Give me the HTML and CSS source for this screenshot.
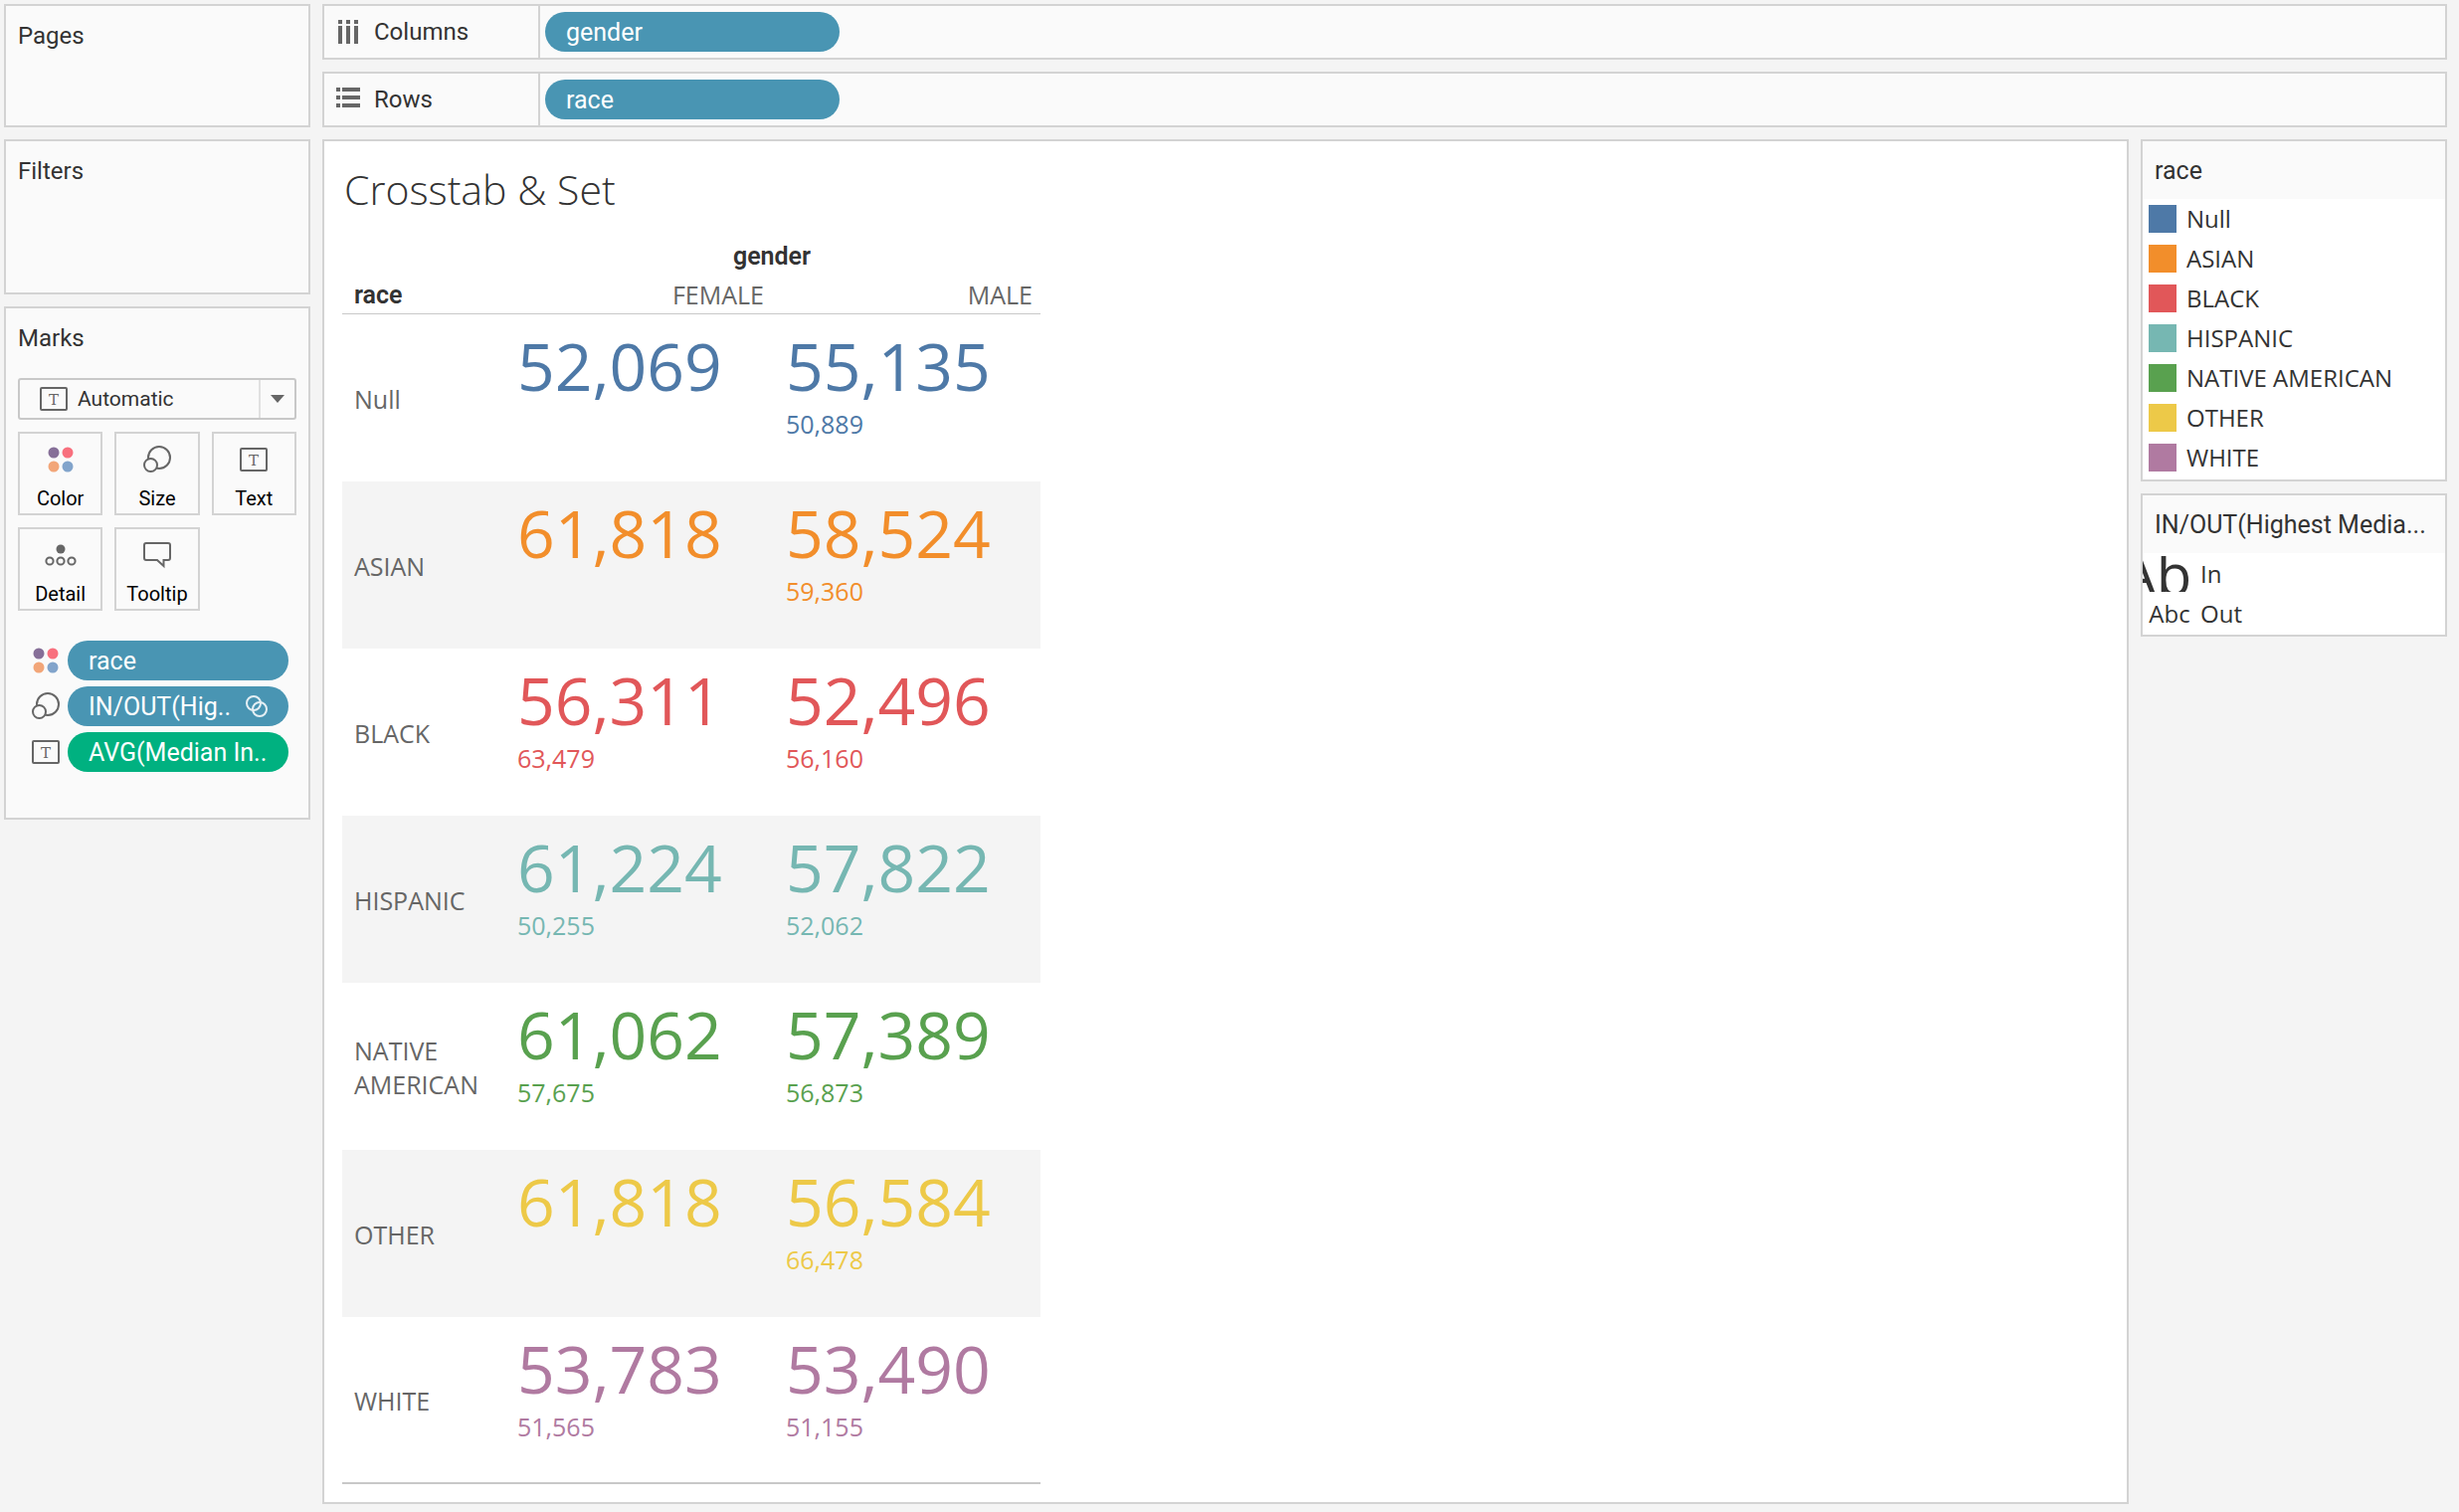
FILE: index.html
```html
<!DOCTYPE html>
<html lang="en">
<head>
<meta charset="utf-8">
<title>Crosstab &amp; Set</title>
<meta name="viewport" content="width=device-width, initial-scale=1">
<link rel="stylesheet" href="styles.css">
</head>
<body>
<svg class="defs" width="0" height="0" aria-hidden="true">
  <symbol id="i-color" viewBox="0 0 28 28">
    <circle cx="7" cy="7" r="5.5" fill="#866f98"/>
    <circle cx="21" cy="7" r="5.5" fill="#f8707e"/>
    <circle cx="7" cy="21" r="5.5" fill="#f2a679"/>
    <circle cx="21" cy="21" r="5.5" fill="#82a4cb"/>
  </symbol>
  <symbol id="i-size" viewBox="0 0 28 28">
    <circle cx="16" cy="12" r="11" fill="none" stroke="#666" stroke-width="2"/>
    <circle cx="7.500" cy="19.500" r="6.500" fill="#fafafa" stroke="#666" stroke-width="2"/>
  </symbol>
  <symbol id="i-text" viewBox="0 0 28 28">
    <rect x="1" y="3" width="26" height="22" rx="1" fill="none" stroke="#666" stroke-width="2"/>
    <text x="14" y="20" text-anchor="middle" class="glyph">T</text>
  </symbol>
  <symbol id="i-detail" viewBox="0 0 32 28">
    <circle cx="16" cy="8" r="4.500" fill="#666"/>
    <g fill="none" stroke="#666" stroke-width="2">
      <circle cx="5" cy="20" r="3.600"/><circle cx="16" cy="20" r="3.600"/><circle cx="27" cy="20" r="3.600"/>
    </g>
  </symbol>
  <symbol id="i-tooltip" viewBox="0 0 28 28">
    <path d="M3 2h22a2 2 0 0 1 2 2v13a2 2 0 0 1-2 2h-4.500v6l-6.500-6H3a2 2 0 0 1-2-2V4a2 2 0 0 1 2-2z" fill="none" stroke="#666" stroke-width="2"/>
  </symbol>
  <symbol id="i-set" viewBox="0 0 24 24">
    <g fill="none" stroke="#e4eff4" stroke-width="2"><circle cx="9" cy="9" r="7"/><circle cx="15" cy="15" r="7"/></g>
  </symbol>
</svg>

<main class="workbook">
  <aside class="cards">
    <section class="card pages"><h2>Pages</h2></section>
    <section class="card filters"><h2>Filters</h2></section>
    <section class="card marks">
      <h2>Marks</h2>
      <div class="mark-type">
        <svg class="icon"><use href="#i-text"/></svg>
        <select aria-label="Mark type"><option>Automatic</option></select>
        <svg class="caret" viewBox="0 0 14 8" aria-hidden="true"><path d="M0 0h14L7 8z" fill="#666"/></svg>
      </div>
      <div class="mark-buttons">
        <button type="button"><svg class="icon"><use href="#i-color"/></svg>Color</button>
        <button type="button"><svg class="icon"><use href="#i-size"/></svg>Size</button>
        <button type="button"><svg class="icon"><use href="#i-text"/></svg>Text</button>
        <button type="button"><svg class="icon wide"><use href="#i-detail"/></svg>Detail</button>
        <button type="button"><svg class="icon"><use href="#i-tooltip"/></svg>Tooltip</button>
      </div>
      <ul class="encodings">
        <li><svg class="icon"><use href="#i-color"/></svg><button type="button" class="pill">race</button></li>
        <li><svg class="icon"><use href="#i-size"/></svg><button type="button" class="pill">IN/OUT(Hig..<svg class="set"><use href="#i-set"/></svg></button></li>
        <li><svg class="icon"><use href="#i-text"/></svg><button type="button" class="pill measure">AVG(Median In..</button></li>
      </ul>
    </section>
  </aside>

  <div class="work">
    <section class="shelf">
      <h2><svg class="shelf-icon" viewBox="0 0 24 24"><path d="M2 0h4v4H2zM10 0h4v4h-4zM18 0h4v4h-4zM2 6h4v18H2zM10 6h4v18h-4zM18 6h4v18h-4z"/></svg>Columns</h2>
      <button type="button" class="pill">gender</button>
    </section>
    <section class="shelf">
      <h2><svg class="shelf-icon" viewBox="0 0 24 24"><path d="M0 0h4v4H0zM6 0h18v4H6zM0 8h4v4H0zM6 8h18v4H6zM0 16h4v4H0zM6 16h18v4H6z"/></svg>Rows</h2>
      <button type="button" class="pill">race</button>
    </section>

    <div class="stage">
      <section class="sheet">
        <h1>Crosstab &amp; Set</h1>
        <table class="crosstab">
          <colgroup><col class="c-race"><col class="c-value"><col class="c-value"></colgroup>
          <thead>
            <tr><td></td><th class="field span" colspan="2" scope="colgroup">gender</th></tr>
            <tr><th class="field" scope="col">race</th><th class="member" scope="col">FEMALE</th><th class="member" scope="col">MALE</th></tr>
          </thead>
          <tbody>
            <tr class="null"><th scope="row">Null</th><td><b>52,069</b></td><td><b>55,135</b><span>50,889</span></td></tr>
            <tr class="asian"><th scope="row">ASIAN</th><td><b>61,818</b></td><td><b>58,524</b><span>59,360</span></td></tr>
            <tr class="black"><th scope="row">BLACK</th><td><b>56,311</b><span>63,479</span></td><td><b>52,496</b><span>56,160</span></td></tr>
            <tr class="hispanic"><th scope="row">HISPANIC</th><td><b>61,224</b><span>50,255</span></td><td><b>57,822</b><span>52,062</span></td></tr>
            <tr class="native"><th scope="row">NATIVE AMERICAN</th><td><b>61,062</b><span>57,675</span></td><td><b>57,389</b><span>56,873</span></td></tr>
            <tr class="other"><th scope="row">OTHER</th><td><b>61,818</b></td><td><b>56,584</b><span>66,478</span></td></tr>
            <tr class="white"><th scope="row">WHITE</th><td><b>53,783</b><span>51,565</span></td><td><b>53,490</b><span>51,155</span></td></tr>
          </tbody>
        </table>
      </section>

      <aside class="legends">
        <section class="legend">
          <h2>race</h2>
          <ul class="swatches">
            <li class="null">Null</li>
            <li class="asian">ASIAN</li>
            <li class="black">BLACK</li>
            <li class="hispanic">HISPANIC</li>
            <li class="native">NATIVE AMERICAN</li>
            <li class="other">OTHER</li>
            <li class="white">WHITE</li>
          </ul>
        </section>
        <section class="legend">
          <h2>IN/OUT(Highest Media...</h2>
          <ul class="sizes">
            <li><span class="sample large">Abc</span>In</li>
            <li><span class="sample">Abc</span>Out</li>
          </ul>
        </section>
      </aside>
    </div>
  </div>
</main>
</body>
</html>
```
FILE: styles.css
```css
* { box-sizing: border-box; }

:root {
  --line: #d3d3d3;
  --panel: #fafafa;
  --ink: #333;
  --ui: Roboto, "Liberation Sans", sans-serif;
  --data: "Open Sans", "Noto Sans", sans-serif;
}

body {
  margin: 0;
  background: #f4f4f4;
  color: var(--ink);
  font: 24px/32px var(--ui);
}

h1, h2, ul { margin: 0; padding: 0; font-weight: 400; }
h2 { font-size: 24px; }
ul { list-style: none; }
button, select { font-family: inherit; margin: 0; }
.defs { display: none; }

.null { --c: #4e79a7; }
.asian { --c: #f28e2b; }
.black { --c: #e15759; }
.hispanic { --c: #76b7b2; }
.native { --c: #59a14f; }
.other { --c: #edc948; }
.white { --c: #b07aa1; }

.workbook {
  display: grid;
  grid-template-columns: 308px minmax(0, 1fr);
  gap: 12px;
  padding: 4px 12px 8px 4px;
}

.cards, .work, .legends {
  display: flex;
  flex-direction: column;
  gap: 12px;
}

.card {
  border: 2px solid var(--line);
  background: var(--panel);
  padding: 14px 12px;
}
.pages { min-height: 124px; }
.filters { min-height: 156px; }
.marks { padding-bottom: 46px; }

.icon { display: block; width: 28px; height: 28px; flex: none; }
.icon.wide { width: 32px; }
.glyph { font: 15px "DejaVu Serif", serif; fill: #666; }

.mark-type {
  display: grid;
  grid-template-columns: 28px 1fr 34px;
  align-items: center;
  height: 42px;
  margin-top: 24px;
  padding-left: 20px;
  border: 2px solid #c8c8c8;
  border-radius: 3px;
}
.mark-type select {
  appearance: none;
  align-self: stretch;
  border: 0;
  border-right: 2px solid #e0e0e0;
  background: none;
  padding: 0 0 0 10px;
  font-size: 21px;
  color: var(--ink);
}
.caret { width: 14px; height: 8px; justify-self: center; }

.mark-buttons {
  display: grid;
  grid-template-columns: repeat(3, 1fr);
  gap: 12px;
  margin-top: 12px;
}
.mark-buttons button {
  display: flex;
  flex-direction: column;
  align-items: center;
  gap: 12px;
  height: 84px;
  padding: 12px 0 0;
  border: 2px solid var(--line);
  background: none;
  color: #000;
  font-size: 20px;
  line-height: 26px;
}

.encodings {
  display: grid;
  gap: 6px;
  margin-top: 30px;
  padding: 0 8px 0 14px;
}
.encodings li { display: flex; align-items: center; gap: 8px; }
.encodings .pill { flex: 1; }

.pill {
  display: flex;
  align-items: center;
  justify-content: space-between;
  height: 40px;
  border: 0;
  border-radius: 20px;
  padding: 0 20px 0 21px;
  background: #4995b3;
  color: #fff;
  font-size: 25px;
  white-space: nowrap;
}
.pill.measure { background: #00b180; }
.set { width: 24px; height: 24px; flex: none; }

.shelf {
  display: flex;
  align-items: center;
  height: 56px;
  border: 2px solid var(--line);
  background: var(--panel);
}
.shelf h2 {
  display: flex;
  align-items: center;
  gap: 14px;
  width: 217px;
  height: 100%;
  padding-left: 12px;
  border-right: 2px solid var(--line);
}
.shelf-icon { width: 24px; height: 24px; fill: #666; }
.shelf .pill { width: 296px; margin-left: 5px; }

.stage {
  display: grid;
  grid-template-columns: minmax(0, 1fr) 308px;
  gap: 12px;
}

.sheet {
  border: 2px solid var(--line);
  background: #fff;
  padding: 20px 18px 18px;
}
.sheet h1 {
  margin-bottom: 20px;
  padding-left: 2px;
  font: 300 41px/56px var(--data);
}

.crosstab {
  width: 702px;
  table-layout: fixed;
  border-collapse: separate;
  border-spacing: 0;
  font-family: var(--data);
}
.c-race { width: 162px; }
.crosstab th, .crosstab td { padding: 0; text-align: left; }
.crosstab .field { padding-left: 12px; font: 600 25px/40px var(--ui); }
.crosstab .span { padding: 0; text-align: center; }
.crosstab .member {
  padding-right: 8px;
  text-align: right;
  font-size: 25px;
  font-weight: 400;
  color: #666;
}
.crosstab thead tr:last-child th { border-bottom: 1px solid #c8c8c8; line-height: 37px; }
.crosstab tbody th {
  height: 168px;
  padding: 2px 0 0 12px;
  font-size: 25px;
  font-weight: 400;
  line-height: 34px;
  color: #666;
}
.crosstab tbody td {
  padding: 8px 0 0 14px;
  vertical-align: top;
  color: var(--c);
}
.crosstab tbody tr:nth-child(even) { background: #f4f4f4; }
.crosstab tbody tr:last-child > * { border-bottom: 2px solid #c8c8c8; }
.crosstab b { display: block; font-size: 66px; line-height: 86px; font-weight: 400; }
.crosstab span { display: block; font-size: 25px; line-height: 32px; }

.legend {
  border: 2px solid var(--line);
  background: #fff;
}
.legend h2 {
  padding: 2px 12px 0;
  background: var(--panel);
  font-size: 25px;
  line-height: 56px;
  white-space: nowrap;
}
.legend ul { font-family: var(--data); }
.swatches {
  display: grid;
  gap: 12px;
  padding: 6px 6px 8px;
}
.swatches li { display: flex; align-items: center; gap: 10px; line-height: 28px; }
.swatches li::before {
  content: "";
  width: 28px;
  height: 28px;
  background: var(--c);
}
.sizes { padding: 1px 0; }
.sizes li { display: flex; align-items: center; gap: 10px; height: 40px; }
.sample {
  display: flex;
  justify-content: center;
  width: 48px;
  height: 36px;
  padding-left: 6px;
  overflow: hidden;
  line-height: 36px;
}
.sample.large { font-size: 58px; }
```
